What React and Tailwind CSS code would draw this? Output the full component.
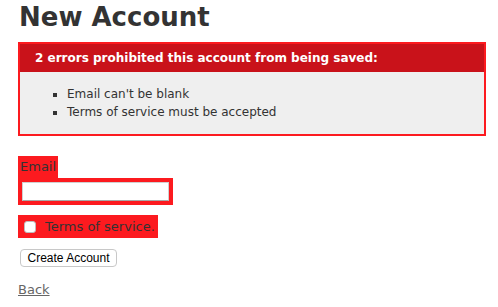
import React from 'react';

const App = () => {
  return (
    <div className="min-h-screen bg-white pl-[18px] text-[#333] text-[13px] leading-[18px] font-['DejaVu_Sans',Verdana,sans-serif]">
      {/* HEADING */}
      <h1 className="pt-[2px] pl-[1px] text-[26px] leading-[30px] font-bold">New Account</h1>

      {/* ERRORS */}
      <div className="mt-[10px] w-[468px] border-2 border-[#fc1a1f] bg-[#efefef]">
        <h2 className="pl-[15px] bg-[#c9121a] text-white text-[12px] leading-[28px] font-bold">
          2 errors prohibited this account from being saved:
        </h2>
        <ul className="mt-[13px] mb-[13px] pl-[47px] list-[square] text-[12px] leading-[18px]">
          <li>Email can't be blank</li>
          <li>Terms of service must be accepted</li>
        </ul>
      </div>

      {/* FORM */}
      <div className="mt-[20px] w-fit bg-[#fc1a1f] px-[2px] py-[2px]">
        <label>Email</label>
      </div>
      <div className="w-fit bg-[#fc1a1f] p-[4px]">
        <input
          type="text"
          className="block w-[147px] h-[19px] bg-white border border-[#d0d0d0] border-b-[#a8a8a8] outline-none"
        />
      </div>

      <div className="mt-[10px] w-fit h-[23px] flex items-center gap-[9px] bg-[#fc1a1f] pl-[6px] pr-[3px]">
        <span className="block w-[12px] h-[12px] rounded-[3px] bg-white border border-[#bdbdbd]"></span>
        <label>Terms of service.</label>
      </div>

      <button className="mt-[11px] ml-[2px] block w-[97px] h-[18px] rounded-[4px] border border-[#c8c8c8] bg-white text-black text-[12px] leading-[16px] font-['Liberation_Sans',Arial,sans-serif]">
        Create Account
      </button>

      <a href="#" className="mt-[14px] block w-fit text-[#666] underline">Back</a>
    </div>
  );
};

export default App;
